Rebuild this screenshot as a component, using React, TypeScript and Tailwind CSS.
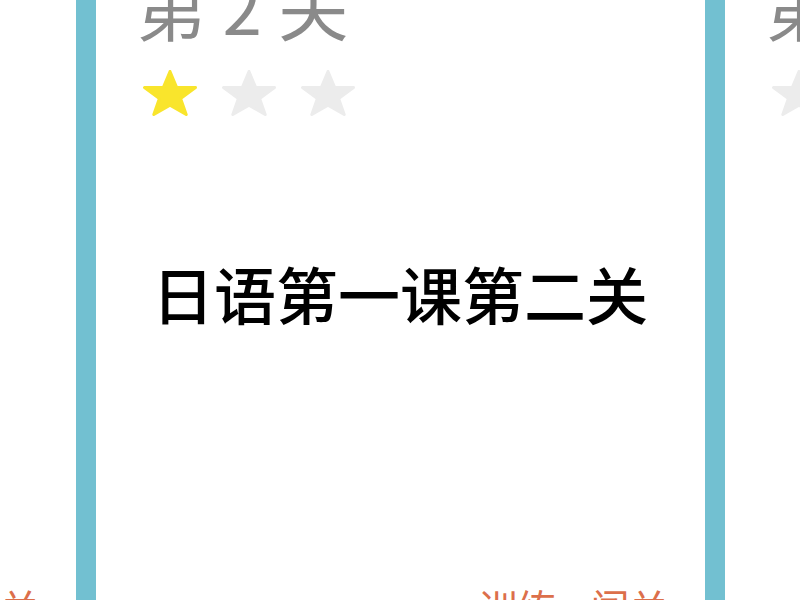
const cjk = { fontFamily: '"Noto Sans CJK SC", "Noto Sans", sans-serif' };

type Level = {
  title: string;
  stars: number;
  name?: string;
};

const levels: Level[] = [
  { title: '第 1 关', stars: 2 },
  { title: '第 2 关', stars: 1, name: '日语第一课第二关' },
  { title: '第 3 关', stars: 0 },
];

function Star({ on }: { on: boolean }) {
  return (
    <svg width="54" height="46" viewBox="0 0 54 46" className="shrink-0">
      <polygon
        points="27,1.5 33.6,17.4 52.5,17.6 37.6,28.6 43.2,44.5 27,35.3 10.8,44.5 16.4,28.6 1.5,17.6 20.4,17.4"
        fill={on ? '#f9e52c' : '#ececec'}
        stroke={on ? '#f9e52c' : '#ececec'}
        strokeWidth="3"
        strokeLinejoin="round"
      />
    </svg>
  );
}

function LevelCard({ level }: { level: Level }) {
  return (
    <div className="w-[609px] h-[700px] shrink-0 bg-white flex flex-col px-[44px]" style={cjk}>
      {/* Title */}
      <div className="text-[71px] leading-none text-[#8a8a8a] h-[71px] whitespace-nowrap -ml-[4px]">
        {level.title}
      </div>

      {/* Stars */}
      <div className="flex gap-[25px] mt-[30px] ml-[3px]">
        {[0, 1, 2].map((i) => (
          <Star key={i} on={i < level.stars} />
        ))}
      </div>

      {/* Level name */}
      <div className="mt-[146px] h-[62px] text-[62px] leading-none font-medium text-black text-center whitespace-nowrap">
        {level.name ?? ''}
      </div>

      {/* Actions */}
      <div className="mt-[263px] flex justify-end gap-[34px] mr-[-8px] text-[39px] leading-none text-[#dc6f4b]">
        <span>训练</span>
        <span>闯关</span>
      </div>
    </div>
  );
}

export default function App() {
  return (
    <div className="w-[800px] h-[600px] overflow-hidden bg-white">
      <div className="flex justify-center gap-[20px] bg-[#72c0d1] -mt-[31px]">
        {levels.map((level) => (
          <LevelCard key={level.title} level={level} />
        ))}
      </div>
    </div>
  );
}
